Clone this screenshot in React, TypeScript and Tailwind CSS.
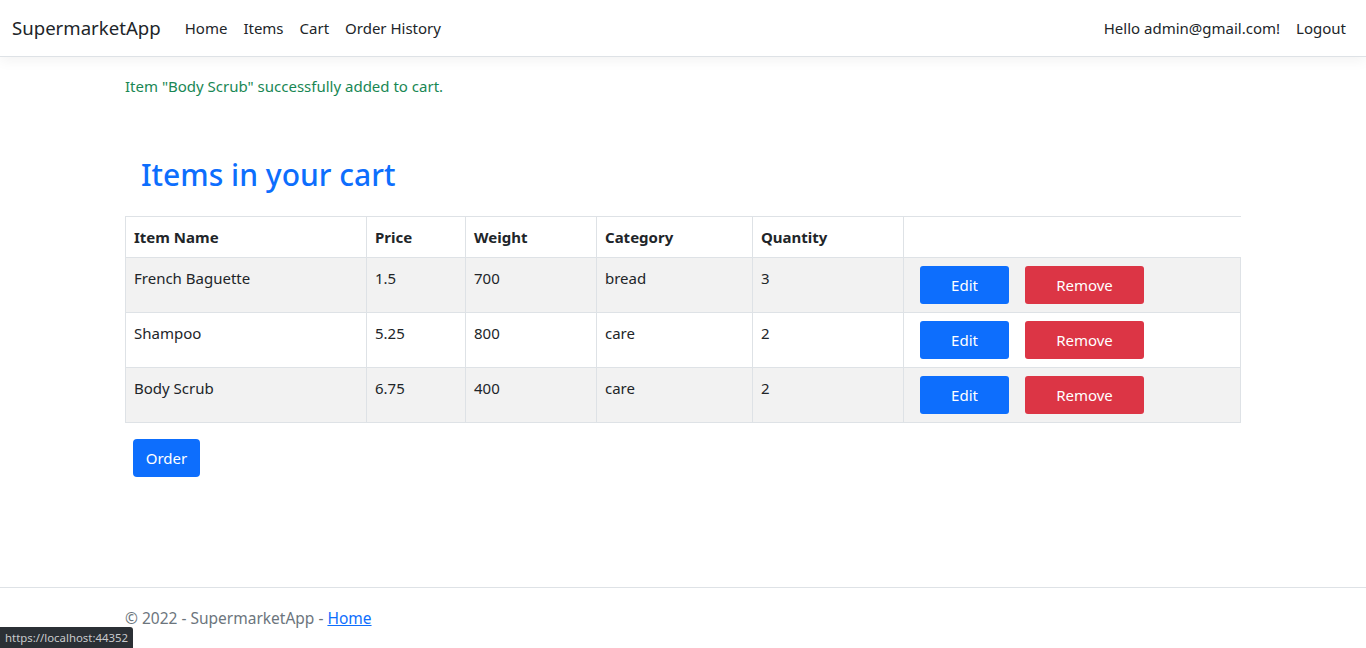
import React from "react";

type CartRow = {
  name: string;
  price: string;
  weight: string;
  category: string;
  quantity: string;
};

const ROWS: CartRow[] = [
  { name: "French Baguette", price: "1.5", weight: "700", category: "bread", quantity: "3" },
  { name: "Shampoo", price: "5.25", weight: "800", category: "care", quantity: "2" },
  { name: "Body Scrub", price: "6.75", weight: "400", category: "care", quantity: "2" },
];

const FONT = { fontFamily: '"Segoe UI", "Noto Sans", "Open Sans", sans-serif' };

function Navbar() {
  return (
    <nav className="flex h-[57px] items-center border-b border-[#dee2e6] bg-white px-3 shadow-[0_4px_12px_rgba(0,0,0,0.05)]">
      <a className="mr-4 text-[18.6px] text-[#212529]">SupermarketApp</a>
      <ul className="flex text-[15px] text-[#212529]">
        <li className="px-2">Home</li>
        <li className="px-2">Items</li>
        <li className="px-2">Cart</li>
        <li className="px-2">Order History</li>
      </ul>
      <div className="ml-auto flex text-[15px] text-[#212529]">
        <span className="px-2">Hello admin@gmail.com!</span>
        <span className="px-2">Logout</span>
      </div>
    </nav>
  );
}

function CartTable() {
  return (
    <table className="w-full border-collapse text-left text-[15px] leading-6 text-[#212529]">
      <thead>
        <tr className="h-[41px] border-t border-[#dee2e6]">
          <th className="w-[241px] border-l border-r border-[#dee2e6] px-2 font-bold">Item Name</th>
          <th className="w-[99px] border-r border-[#dee2e6] px-2 font-bold">Price</th>
          <th className="w-[131px] border-r border-[#dee2e6] px-2 font-bold">Weight</th>
          <th className="w-[156px] border-r border-[#dee2e6] px-2 font-bold">Category</th>
          <th className="w-[151px] border-r border-[#dee2e6] px-2 font-bold">Quantity</th>
          <th className="px-2"></th>
        </tr>
      </thead>
      <tbody>
        {ROWS.map((row, i) => (
          <tr key={row.name} className={i % 2 === 0 ? "bg-[#f2f2f2]" : "bg-white"}>
            <td className="h-[55px] border border-[#dee2e6] px-2 pt-2 align-top">{row.name}</td>
            <td className="border border-[#dee2e6] px-2 pt-2 align-top">{row.price}</td>
            <td className="border border-[#dee2e6] px-2 pt-2 align-top">{row.weight}</td>
            <td className="border border-[#dee2e6] px-2 pt-2 align-top">{row.category}</td>
            <td className="border border-[#dee2e6] px-2 pt-2 align-top">{row.quantity}</td>
            <td className="border border-[#dee2e6] px-2 pt-2 align-top">
              <div className="flex gap-4 pl-2">
                <button className="h-[38px] w-[89px] rounded-[3px] bg-[#0d6efd] text-white">Edit</button>
                <button className="h-[38px] w-[119px] rounded-[3px] bg-[#dc3545] text-white">Remove</button>
              </div>
            </td>
          </tr>
        ))}
      </tbody>
    </table>
  );
}

export default function App() {
  return (
    <div className="relative flex min-h-screen flex-col bg-white" style={FONT}>
      <Navbar />
      <main className="mx-auto w-[1116px] pt-4">
        <p className="pt-px text-[15px] leading-6 text-[#198754]">Item "Body Scrub" successfully added to cart.</p>
        <h2 className="mt-[58px] pl-4 text-[30px] font-medium leading-[38px] text-[#0d6efd]">Items in your cart</h2>
        <div className="mt-[22px]">
          <CartTable />
        </div>
        <button className="ml-2 mt-[16px] h-[38px] w-[67px] rounded-[4px] bg-[#0d6efd] text-[15px] text-white">
          Order
        </button>
      </main>
      <footer className="mt-auto h-[61px] border-t border-[#dee2e6] text-[15.5px] leading-[60px] text-[#6c757d]">
        <div className="mx-auto w-[1116px]">
          © 2022 - SupermarketApp - <a className="text-[#0d6efd] underline">Home</a>
        </div>
      </footer>
      <div className="absolute bottom-0 left-0 flex h-[21px] items-center rounded-tr-[3px] bg-[#2b3035] px-[5px] text-[11.4px] text-[#c8cacc]">
        https://localhost:44352
      </div>
    </div>
  );
}
